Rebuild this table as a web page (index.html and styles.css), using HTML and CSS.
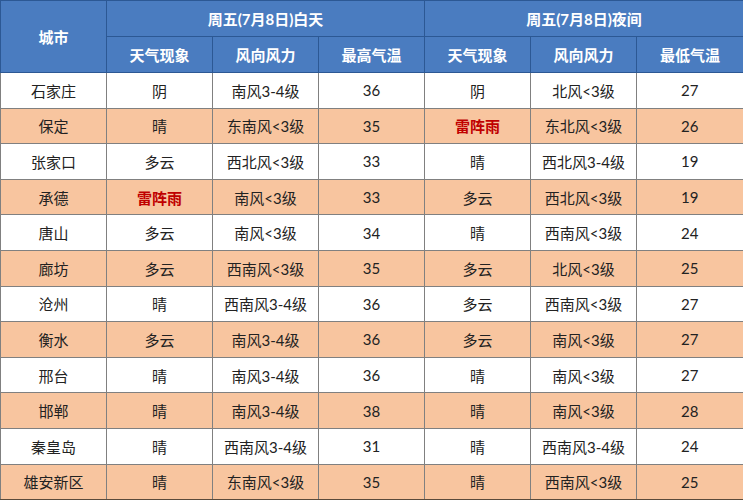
FILE: index.html
```html
<!DOCTYPE html>
<html lang="zh">
<head>
<meta charset="utf-8">
<link rel="stylesheet" href="styles.css">
</head>
<body>
<table class="wx">
  <colgroup>
    <col class="c"><col class="c"><col class="c"><col class="c"><col class="c"><col class="c"><col class="c last">
  </colgroup>
  <thead>
    <tr class="h1">
      <th rowspan="2">城市</th>
      <th colspan="3">周五(7月8日)白天</th>
      <th colspan="3">周五(7月8日)夜间</th>
    </tr>
    <tr class="h2">
      <th>天气现象</th><th>风向风力</th><th>最高气温</th>
      <th>天气现象</th><th>风向风力</th><th>最低气温</th>
    </tr>
  </thead>
  <tbody>
    <tr><td>石家庄</td><td>阴</td><td>南风3-4级</td><td>36</td><td>阴</td><td>北风&lt;3级</td><td>27</td></tr>
    <tr class="alt"><td>保定</td><td>晴</td><td>东南风&lt;3级</td><td>35</td><td class="red">雷阵雨</td><td>东北风&lt;3级</td><td>26</td></tr>
    <tr><td>张家口</td><td>多云</td><td>西北风&lt;3级</td><td>33</td><td>晴</td><td>西北风3-4级</td><td>19</td></tr>
    <tr class="alt"><td>承德</td><td class="red">雷阵雨</td><td>南风&lt;3级</td><td>33</td><td>多云</td><td>西北风&lt;3级</td><td>19</td></tr>
    <tr><td>唐山</td><td>多云</td><td>南风&lt;3级</td><td>34</td><td>晴</td><td>西南风&lt;3级</td><td>24</td></tr>
    <tr class="alt"><td>廊坊</td><td>多云</td><td>西南风&lt;3级</td><td>35</td><td>多云</td><td>北风&lt;3级</td><td>25</td></tr>
    <tr><td>沧州</td><td>晴</td><td>西南风3-4级</td><td>36</td><td>多云</td><td>西南风&lt;3级</td><td>27</td></tr>
    <tr class="alt"><td>衡水</td><td>多云</td><td>南风3-4级</td><td>36</td><td>多云</td><td>南风&lt;3级</td><td>27</td></tr>
    <tr><td>邢台</td><td>晴</td><td>南风3-4级</td><td>36</td><td>晴</td><td>南风&lt;3级</td><td>27</td></tr>
    <tr class="alt"><td>邯郸</td><td>晴</td><td>南风3-4级</td><td>38</td><td>晴</td><td>南风&lt;3级</td><td>28</td></tr>
    <tr><td>秦皇岛</td><td>晴</td><td>西南风3-4级</td><td>31</td><td>晴</td><td>西南风3-4级</td><td>24</td></tr>
    <tr class="alt"><td>雄安新区</td><td>晴</td><td>东南风&lt;3级</td><td>35</td><td>晴</td><td>西南风&lt;3级</td><td>25</td></tr>
  </tbody>
</table>
</body>
</html>
```

FILE: styles.css
```css
html, body {
  margin: 0;
  padding: 0;
  background: #ffffff;
}

.wx {
  width: 743px;
  table-layout: fixed;
  border-collapse: collapse;
  font-family: Lato, "Noto Sans CJK SC", sans-serif;
  font-size: 15px;
  color: #222222;
}

.wx .c { width: 106px; }
.wx .last { width: 107px; }

.wx th {
  background: #4a7cc0;
  color: #ffffff;
  font-weight: bold;
  border: 1px solid #2c5894;
  height: 35px;
  padding: 0;
  text-align: center;
  vertical-align: middle;
}

.wx td {
  height: 34.6px;
  padding: 0;
  text-align: center;
  vertical-align: middle;
  border: 1px solid #808080;
  background: #ffffff;
}

.wx tbody tr:last-child td {
  border-bottom: 1px solid #5a4a3a;
}

.wx td:last-child {
  border-right: 2px solid #555555;
}

.wx tr.alt td {
  background: #f8c59f;
}

.wx td.red {
  color: #c00000;
  font-weight: bold;
}
```
